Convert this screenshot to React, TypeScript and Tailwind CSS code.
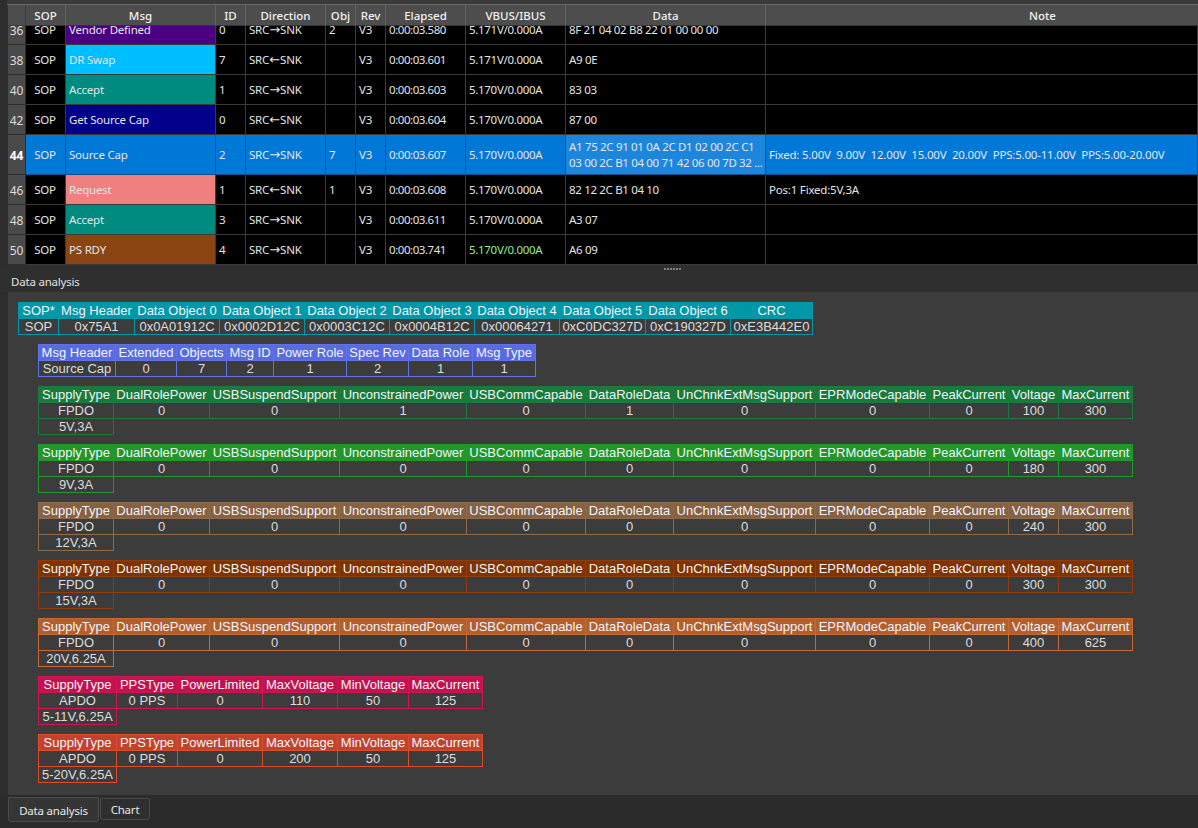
const COLS = "grid grid-cols-[40px_150px_30px_80px_30px_30px_80px_100px_200px_1fr]";

type Row = {
  n: number; msg: string; msgBg: string; id: string; right: boolean; obj: string; t: string; v: string; data: string; note?: string;
  h?: string; sel?: boolean; vCls?: string;
};

const rows: Row[] = [
  { n: 36, msg: "Vendor Defined", msgBg: "bg-[#4b0082]", id: "0", right: true, obj: "2", t: "0:00:03.580", v: "5.171V/0.000A", data: "8F 21 04 02 B8 22 01 00 00 00" },
  { n: 38, msg: "DR Swap", msgBg: "bg-[#00bfff]", id: "7", right: false, obj: "", t: "0:00:03.601", v: "5.171V/0.000A", data: "A9 0E" },
  { n: 40, msg: "Accept", msgBg: "bg-[#008b80]", id: "1", right: true, obj: "", t: "0:00:03.603", v: "5.170V/0.000A", data: "83 03" },
  { n: 42, msg: "Get Source Cap", msgBg: "bg-[#00008b]", id: "0", right: false, obj: "", t: "0:00:03.604", v: "5.170V/0.000A", data: "87 00" },
  { n: 44, msg: "Source Cap", msgBg: "", id: "2", right: true, obj: "7", t: "0:00:03.607", v: "5.170V/0.000A", data: "A1 75 2C 91 01 0A 2C D1 02 00 2C C1\n03 00 2C B1 04 00 71 42 06 00 7D 32 ...", note: "Fixed: 5.00V  9.00V  12.00V  15.00V  20.00V  PPS:5.00-11.00V  PPS:5.00-20.00V", h: "h-[40px]", sel: true },
  { n: 46, msg: "Request", msgBg: "bg-[#f08080]", id: "1", right: false, obj: "1", t: "0:00:03.608", v: "5.170V/0.000A", data: "82 12 2C B1 04 10", note: "Pos:1 Fixed:5V,3A" },
  { n: 48, msg: "Accept", msgBg: "bg-[#008b80]", id: "3", right: true, obj: "", t: "0:00:03.611", v: "5.170V/0.000A", data: "A3 07" },
  { n: 50, msg: "PS RDY", msgBg: "bg-[#8b4513]", id: "4", right: true, obj: "", t: "0:00:03.741", v: "5.170V/0.000A", data: "A6 09", vCls: "text-[#90ee90]" },
];

function Cell({ children, cls = "", sel }: { children?: React.ReactNode; cls?: string; sel?: boolean }) {
  return (
    <div className={`flex items-center pl-[3px] pr-1 overflow-hidden whitespace-pre border-r border-b ${sel ? "border-[#0f4f8f]" : "border-[#3a3a3a]"} ${cls}`}>
      {children}
    </div>
  );
}

function Dir({ right }: { right: boolean }) {
  return (
    <span>
      SRC<span className="font-['DejaVu_Sans',sans-serif] text-[13px] leading-none tracking-normal">{right ? "\u2192" : "\u2190"}</span>SNK
    </span>
  );
}

function GridRow({ r }: { r: Row }) {
  const h = r.h ?? "h-[30px]";
  return (
    <div className={`flex ${h}`}>
      <div className={`w-[18px] shrink-0 flex items-center justify-center pt-[2px] tracking-normal text-[12px] border-r border-b border-[#2e2e2e] bg-[#4a4a4a] ${r.sel ? "font-bold text-white" : "text-[#dddddd]"}`}>
        {r.n}
      </div>
      <div className={`${COLS} flex-1 ${r.sel ? "bg-[#0078d7]" : "bg-black"} text-[#e4e4e4]`}>
        <Cell sel={r.sel} cls="justify-center">SOP</Cell>
        <Cell sel={r.sel} cls={r.msgBg}>{r.msg}</Cell>
        <Cell sel={r.sel}>{r.id}</Cell>
        <Cell sel={r.sel}><Dir right={r.right} /></Cell>
        <Cell sel={r.sel}>{r.obj}</Cell>
        <Cell sel={r.sel}>V3</Cell>
        <Cell sel={r.sel} cls="tracking-[-0.45px]">{r.t}</Cell>
        <Cell sel={r.sel} cls={`tracking-[-0.3px] ${r.vCls ?? ""}`}>{r.v}</Cell>
        <Cell sel={r.sel} cls={`tracking-[-0.33px] ${r.sel ? "bg-[#1c86dc] leading-[16px]" : ""}`}>{r.data}</Cell>
        <Cell sel={r.sel}>{r.note}</Cell>
      </div>
    </div>
  );
}

const HEAD = ["SOP", "Msg", "ID", "Direction", "Obj", "Rev", "Elapsed", "VBUS/IBUS", "Data"];

type Theme = { line: string; fill: string };

function Tbl({ grid, theme, head, body, extra }: { grid: string; theme: Theme; head: string[]; body: string[]; extra?: string }) {
  const base = `flex items-center justify-center overflow-hidden whitespace-nowrap border-r border-b ${theme.line}`;
  return (
    <div className="w-fit font-['Liberation_Sans',Arial,sans-serif] text-[13px] leading-[15px] tracking-normal">
      <div className={`grid ${grid}`}>
        {head.map((t, i) => (
          <div key={i} className={`${base} h-[17px] border-t ${i === 0 ? "border-l" : ""} ${theme.fill} text-[#f0f4f8]`}>{t}</div>
        ))}
        {body.map((t, i) => (
          <div key={i} className={`${base} h-[16px] ${i === 0 ? "border-l" : ""} text-[#dcdcdc]`}>{t}</div>
        ))}
        {extra ? <div className={`${base} h-[16px] border-l text-[#dcdcdc]`}>{extra}</div> : null}
      </div>
    </div>
  );
}

const FPDO_GRID = "grid-cols-[76px_96px_130px_127px_119px_88px_142px_114px_79px_50px_74px]";
const FPDO_HEAD = ["SupplyType", "DualRolePower", "USBSuspendSupport", "UnconstrainedPower", "USBCommCapable", "DataRoleData", "UnChnkExtMsgSupport", "EPRModeCapable", "PeakCurrent", "Voltage", "MaxCurrent"];
const APDO_GRID = "grid-cols-[79px_61px_85px_75px_71px_74px]";
const APDO_HEAD = ["SupplyType", "PPSType", "PowerLimited", "MaxVoltage", "MinVoltage", "MaxCurrent"];

const fpdo: { theme: Theme; vals: string[]; extra: string }[] = [
  { theme: { line: "border-[#1b7a3c]", fill: "bg-[#1a7a3a]" }, vals: ["FPDO", "0", "0", "1", "0", "1", "0", "0", "0", "100", "300"], extra: "5V,3A" },
  { theme: { line: "border-[#229a2b]", fill: "bg-[#22962a]" }, vals: ["FPDO", "0", "0", "0", "0", "0", "0", "0", "0", "180", "300"], extra: "9V,3A" },
  { theme: { line: "border-[#8f6a4a]", fill: "bg-[#866144]" }, vals: ["FPDO", "0", "0", "0", "0", "0", "0", "0", "0", "240", "300"], extra: "12V,3A" },
  { theme: { line: "border-[#8f3d0c]", fill: "bg-[#7e3300]" }, vals: ["FPDO", "0", "0", "0", "0", "0", "0", "0", "0", "300", "300"], extra: "15V,3A" },
  { theme: { line: "border-[#c56a32]", fill: "bg-[#b25f30]" }, vals: ["FPDO", "0", "0", "0", "0", "0", "0", "0", "0", "400", "625"], extra: "20V,6.25A" },
];

export default function App() {
  return (
    <div className="w-[1198px] h-[828px] overflow-hidden flex flex-col bg-[#2d2d2d] font-['Noto_Sans','Open_Sans',sans-serif] text-[11.5px] tracking-[-0.2px] text-[#e4e4e4]">
      <div className="h-[5px] shrink-0 ml-[7px] bg-[#3a3a3a] border-b border-[#666666]" />
      <div className="ml-[8px] flex flex-col shrink-0">
        <div className="flex h-[21px]">
          <div className="w-[18px] shrink-0 bg-[#4d4d4d] border-r border-b border-[#3a3a3a]" />
          <div className={`${COLS} flex-1 bg-[#4d4d4d] font-medium tracking-normal text-[#f0f0f0]`}>
            {HEAD.map((h) => (
              <div key={h} className="flex items-center justify-center pt-[2px] border-r border-r-[#636363] border-b border-b-[#333333]">{h}</div>
            ))}
            <div className="flex items-center justify-center pt-[2px] pl-[121px] border-b border-b-[#333333]">Note</div>
          </div>
        </div>
        <div className="h-[239px] overflow-hidden">
          <div className="-mt-[11px]">
            {rows.map((r) => <GridRow key={r.n} r={r} />)}
          </div>
        </div>
      </div>
      <div className="h-[27px] shrink-0 flex flex-col bg-[#2f2f2f]">
        <div className="flex justify-center gap-[1px] pt-[3px] h-[9px] ml-[146px]">
          {[0, 1, 2, 3, 4, 5].map((i) => <span key={i} className="w-[2px] h-[2px] bg-[#808080]" />)}
        </div>
        <div className="pl-[11px] leading-[16px] text-[#e0e0e0]">Data analysis</div>
      </div>
      <div className="ml-[8px] flex-1 bg-[#3c3c3c] pt-[10px] pl-[10px] flex flex-col gap-[9px] overflow-hidden">
        <Tbl
          grid="grid-cols-[41px_76px_85px_85px_85px_85px_85px_86px_85px_82px]"
          theme={{ line: "border-[#0097a7]", fill: "bg-[#0097a7]" }}
          head={["SOP*", "Msg Header", "Data Object 0", "Data Object 1", "Data Object 2", "Data Object 3", "Data Object 4", "Data Object 5", "Data Object 6", "CRC"]}
          body={["SOP", "0x75A1", "0x0A01912C", "0x0002D12C", "0x0003C12C", "0x0004B12C", "0x00064271", "0xC0DC327D", "0xC190327D", "0xE3B442E0"]}
        />
        <div className="pl-[20px] flex flex-col gap-[9px]">
          <Tbl
            grid="grid-cols-[78px_61px_50px_47px_73px_62px_64px_63px]"
            theme={{ line: "border-[#5f72e6]", fill: "bg-[#5a6be0]" }}
            head={["Msg Header", "Extended", "Objects", "Msg ID", "Power Role", "Spec Rev", "Data Role", "Msg Type"]}
            body={["Source Cap", "0", "7", "2", "1", "2", "1", "1"]}
          />
          {fpdo.map((f, i) => (
            <Tbl key={i} grid={FPDO_GRID} theme={f.theme} head={FPDO_HEAD} body={f.vals} extra={f.extra} />
          ))}
          <Tbl
            grid={APDO_GRID}
            theme={{ line: "border-[#d01552]", fill: "bg-[#c2134f]" }}
            head={APDO_HEAD}
            body={["APDO", "0 PPS", "0", "110", "50", "125"]}
            extra="5-11V,6.25A"
          />
          <Tbl
            grid={APDO_GRID}
            theme={{ line: "border-[#dc4d2a]", fill: "bg-[#c2432c]" }}
            head={APDO_HEAD}
            body={["APDO", "0 PPS", "0", "200", "50", "125"]}
            extra="5-20V,6.25A"
          />
        </div>
      </div>
      <div className="h-[33px] shrink-0 flex items-start pl-[8px] pt-[2px] gap-[1px] bg-[#2b2b2b] text-[#e8e8e8]">
        <div className="h-[25px] w-[91px] flex items-center justify-center pt-[3px] bg-[#353535] border border-[#4c4c4c] rounded-b-[3px]">Data analysis</div>
        <div className="mt-[1px] h-[22px] w-[50px] flex items-center justify-center pt-[2px] bg-[#2f2f2f] border border-[#484848] rounded-b-[3px]">Chart</div>
      </div>
    </div>
  );
}
